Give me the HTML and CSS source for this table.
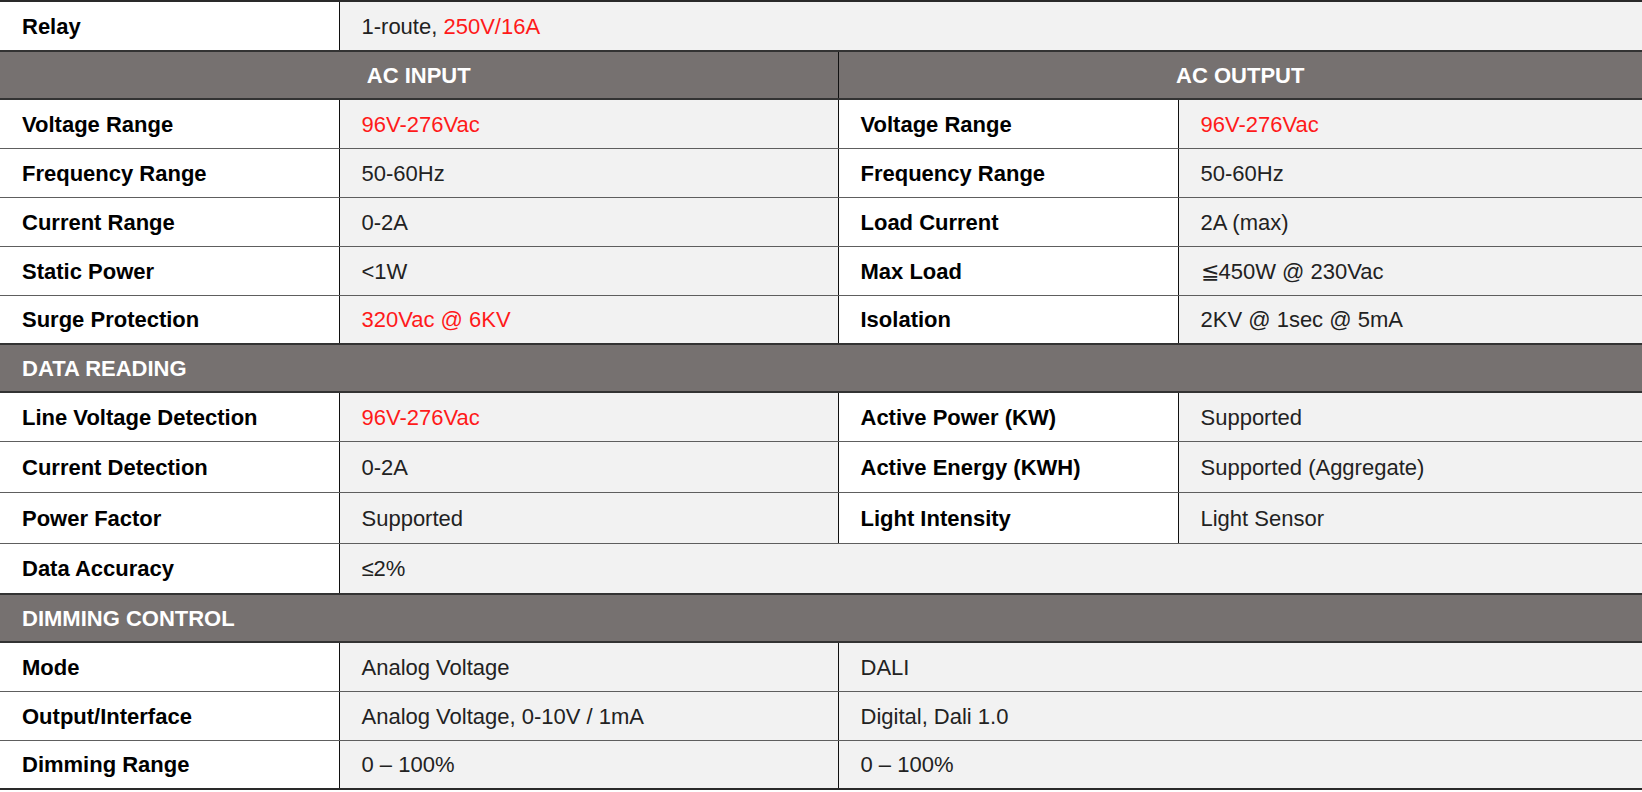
FILE: index.html
```html
<!DOCTYPE html>
<html lang="en">
<head>
<meta charset="utf-8">
<title>Specifications</title>
<link rel="stylesheet" href="styles.css">
</head>
<body>
<table class="spec">
  <colgroup>
    <col class="c1"><col class="c2"><col class="c3"><col class="c4">
  </colgroup>
  <tbody>
    <tr class="row r-top">
      <th class="lbl">Relay</th>
      <td class="val" colspan="3">1-route, <span class="red">250V/16A</span></td>
    </tr>
    <tr class="hdr">
      <th class="center vsplit" colspan="2">AC INPUT</th>
      <th class="center" colspan="2">AC OUTPUT</th>
    </tr>
    <tr class="row">
      <th class="lbl">Voltage Range</th><td class="val vsplit"><span class="red">96V-276Vac</span></td>
      <th class="lbl">Voltage Range</th><td class="val"><span class="red">96V-276Vac</span></td>
    </tr>
    <tr class="row">
      <th class="lbl">Frequency Range</th><td class="val vsplit">50-60Hz</td>
      <th class="lbl">Frequency Range</th><td class="val">50-60Hz</td>
    </tr>
    <tr class="row">
      <th class="lbl">Current Range</th><td class="val vsplit">0-2A</td>
      <th class="lbl">Load Current</th><td class="val">2A (max)</td>
    </tr>
    <tr class="row">
      <th class="lbl">Static Power</th><td class="val vsplit">&lt;1W</td>
      <th class="lbl">Max Load</th><td class="val">&#8806;450W @ 230Vac</td>
    </tr>
    <tr class="row">
      <th class="lbl">Surge Protection</th><td class="val vsplit"><span class="red">320Vac @ 6KV</span></td>
      <th class="lbl">Isolation</th><td class="val">2KV @ 1sec @ 5mA</td>
    </tr>
    <tr class="hdr">
      <th class="left" colspan="4">DATA READING</th>
    </tr>
    <tr class="row">
      <th class="lbl">Line Voltage Detection</th><td class="val vsplit"><span class="red">96V-276Vac</span></td>
      <th class="lbl">Active Power (KW)</th><td class="val">Supported</td>
    </tr>
    <tr class="row tall">
      <th class="lbl">Current Detection</th><td class="val vsplit">0-2A</td>
      <th class="lbl">Active Energy (KWH)</th><td class="val">Supported (Aggregate)</td>
    </tr>
    <tr class="row tall">
      <th class="lbl">Power Factor</th><td class="val vsplit">Supported</td>
      <th class="lbl">Light Intensity</th><td class="val">Light Sensor</td>
    </tr>
    <tr class="row tall">
      <th class="lbl">Data Accuracy</th><td class="val" colspan="3">&le;2%</td>
    </tr>
    <tr class="hdr">
      <th class="left" colspan="4">DIMMING CONTROL</th>
    </tr>
    <tr class="row">
      <th class="lbl">Mode</th><td class="val vsplit">Analog Voltage</td>
      <td class="val" colspan="2">DALI</td>
    </tr>
    <tr class="row">
      <th class="lbl">Output/Interface</th><td class="val vsplit">Analog Voltage, 0-10V / 1mA</td>
      <td class="val" colspan="2">Digital, Dali 1.0</td>
    </tr>
    <tr class="row r-last">
      <th class="lbl">Dimming Range</th><td class="val vsplit">0 &ndash; 100%</td>
      <td class="val" colspan="2">0 &ndash; 100%</td>
    </tr>
  </tbody>
</table>
</body>
</html>
```

FILE: styles.css
```css
html, body {
  margin: 0;
  padding: 0;
  background: #ffffff;
}

.spec {
  width: 1642px;
  table-layout: fixed;
  border-collapse: collapse;
  font-family: "Liberation Sans", Arial, sans-serif;
  font-size: 22px;
  color: #1c1c1c;
}

.c1 { width: 339px; }
.c2 { width: 499px; }
.c3 { width: 340px; }
.c4 { width: 464px; }

.spec th,
.spec td {
  padding: 2px 0 0 22px;
  text-align: left;
  vertical-align: middle;
  white-space: nowrap;
  border-top: 1px solid #5e5e5e;
  border-bottom: 1px solid #5e5e5e;
}

.row { height: 49px; }
.row.tall { height: 51px; }
.r-top th, .r-top td { border-top: 2px solid #2a2a2a; height: 46px; }
.r-last th, .r-last td { border-bottom: 2px solid #2a2a2a; }

.lbl {
  font-weight: bold;
  color: #000000;
  background: #ffffff;
  border-right: 1.5px solid #111111;
}

.val {
  font-weight: normal;
  background: #f2f2f2;
  color: #222222;
}

.val.vsplit {
  border-right: 1.5px solid #111111;
}

.red { color: #ff1a1a; }

.hdr { height: 48px; }
.hdr th {
  background: #767170;
  color: #ffffff;
  font-weight: bold;
  border-top: 2px solid #333333;
  border-bottom: 2px solid #333333;
}
.hdr th.center {
  text-align: center;
  padding: 2px 0 0 0;
}
.hdr th.vsplit {
  border-right: 1.5px solid #111111;
}
```
